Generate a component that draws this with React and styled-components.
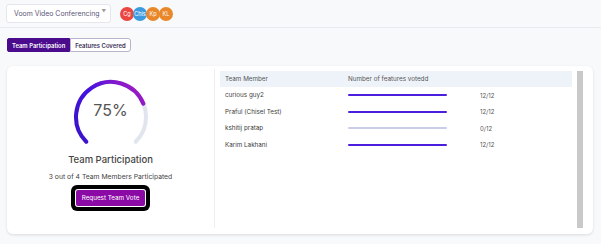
import styled, { createGlobalStyle } from "styled-components";

const GlobalStyle = createGlobalStyle`
  body{
    margin:0;
    background:#f8f9fb;
    font-family:Inter, "Noto Sans", sans-serif;
    color:#3d3d3d;
  }
`;
const Page = styled.div`
  width:601px;
  min-height:244px;
  background:#f8f9fb;
`;
const Header = styled.div`
  height:28px;
  box-sizing:border-box;
  border-bottom:1px solid #e9ebf1;
  display:flex;
  align-items:center;
  padding:0 6px;
  gap:9px;
`;
const SelectBox = styled.div`
  width:105px;
  height:19px;
  box-sizing:border-box;
  background:#fff;
  border:1px solid #e6e6ee;
  border-radius:3px;
  display:flex;
  align-items:center;
  justify-content:space-between;
  padding:0 4px 0 7px;
  font-size:6.9px;
  white-space:nowrap;
  color:#5b5677;
  span.arrow{
    font-size:4.5px;
    color:#999;
    margin-top:-4px;
  }
`;
const Avatars = styled.div`
  display:flex;
`;
const Avatar = styled.div`
  width:14px;
  height:14px;
  border-radius:50%;
  background:${p=>p.color};
  color:#fff;
  font-size:5.5px;
  display:flex;
  align-items:center;
  justify-content:center;
  margin-left:${p=>p.first?"0":"-1px"};
`;
const Tabs = styled.div`
  display:flex;
  margin:10px 0 0 7px;
`;
const Tab = styled.button`
  height:14px;
  padding:0 4px;
  font-family:inherit;
  font-size:5.9px;
  font-weight:600;
  border:1px solid ${p=>p.active?"#4a0b8c":"#b9b4cc"};
  background:${p=>p.active?"#4a0b8c":"#fff"};
  color:${p=>p.active?"#fff":"#3a2f55"};
  border-radius:${p=>p.active?"2px 0 0 2px":"0 3px 3px 0"};
  cursor:pointer;
`;
const Card = styled.div`
  margin:14px 0 0 7px;
  width:586px;
  height:168px;
  box-sizing:border-box;
  background:#fff;
  border-radius:6px;
  box-shadow:0 1px 3px rgba(0,0,0,0.12);
  display:flex;
`;
const LeftPanel = styled.div`
  width:208px;
  display:flex;
  flex-direction:column;
  align-items:center;
  padding-top:8px;
  box-sizing:border-box;
  margin:3px 0 6px;
  border-right:1px solid #eceef2;
`;
const Gauge = styled.div`
  display:grid;
  place-items:center;
  width:80px;
  height:70px;
  svg, div{ grid-area:1/1; }
`;
const Percent = styled.div`
  font-size:16px;
  color:#555;
  margin-top:-5px;
`;
const Title = styled.div`
  font-size:9.5px;
  font-weight:500;
  color:#444;
  margin-top:7px;
`;
const Subtitle = styled.div`
  font-size:6.8px;
  color:#444;
  margin-top:7px;
`;
const VoteButton = styled.button`
  margin-top:9px;
  height:16px;
  padding:0 6px;
  font-family:inherit;
  font-size:6.3px;
  color:#fff;
  background:#8b0aa6;
  border:none;
  border-radius:2px;
  box-shadow:0 0 0 1px #fff, 0 0 0 5px #000;
  outline:none;
`;
const RightPanel = styled.div`
  flex:1;
  display:flex;
  padding:5px 10px 6px 5px;
  gap:5px;
`;
const Table = styled.div`
  flex:1;
`;
const Row = styled.div`
  display:grid;
  grid-template-columns:123px 132px 1fr;
  align-items:center;
  height:${p=>p.head?"16px":"16.5px"};
  padding-left:5px;
  background:${p=>p.head?"#eef3f9":"transparent"};
  font-size:6.3px;
  color:${p=>p.head?"#555":"#3d3d3d"};
`;
const Bar = styled.div`
  width:99px;
  height:2px;
  border-radius:1px;
  background:${p=>p.empty?"#c9cde7":"#4b1ddc"};
`;
const Value = styled.span`
  font-size:6px;
  color:#555;
`;
const Scrollbar = styled.div`
  width:6px;
  background:#c9c9c9;
`;

const members = [
  {name:"curious guy2", voted:12},
  {name:"Praful (Chisel Test)", voted:12},
  {name:"kshitij pratap", voted:0},
  {name:"Karim Lakhani", voted:12},
];

const GaugeSvg = () => (
  <svg width="80" height="70" viewBox="0 0 80 70">
    <defs>
      <linearGradient id="g" x1="0" y1="1" x2="1" y2="0.2">
        <stop offset="0" stopColor="#3a12c9"/>
        <stop offset="0.55" stopColor="#4512e0"/>
        <stop offset="1" stopColor="#a11bc2"/>
      </linearGradient>
    </defs>
    <path d="M15.25 64.75 A35 35 0 1 1 64.75 64.75" fill="none" stroke="#e1e5ee" strokeWidth="4" strokeLinecap="round"/>
    <path d="M15.25 64.75 A35 35 0 1 1 72.34 26.61" fill="none" stroke="url(#g)" strokeWidth="4" strokeLinecap="round"/>
  </svg>
);

const App = () => {
  return (
    <Page>
      <GlobalStyle/>
      <Header>
        <SelectBox>Voom Video Conferencing<span className="arrow">▼</span></SelectBox>
        <Avatars>
          <Avatar first color="#e9473f">Cg</Avatar>
          <Avatar color="#3c9be0">Chis</Avatar>
          <Avatar color="#e8882b">Kp</Avatar>
          <Avatar color="#e8882b">KL</Avatar>
        </Avatars>
      </Header>
      <Tabs>
        <Tab active>Team Participation</Tab>
        <Tab>Features Covered</Tab>
      </Tabs>
      <Card>
        <LeftPanel>
          <Gauge>
            <GaugeSvg/>
            <Percent>75%</Percent>
          </Gauge>
          <Title>Team Participation</Title>
          <Subtitle>3 out of 4 Team Members Participated</Subtitle>
          <VoteButton>Request Team Vote</VoteButton>
        </LeftPanel>
        <RightPanel>
          <Table>
            <Row head>
              <span>Team Member</span>
              <span>Number of features votedd</span>
              <span/>
            </Row>
            {members.map(m=>(
              <Row key={m.name}>
                <span>{m.name}</span>
                <Bar empty={m.voted===0}/>
                <Value>{m.voted}/12</Value>
              </Row>
            ))}
          </Table>
          <Scrollbar/>
        </RightPanel>
      </Card>
    </Page>
  );
};

export default App;
